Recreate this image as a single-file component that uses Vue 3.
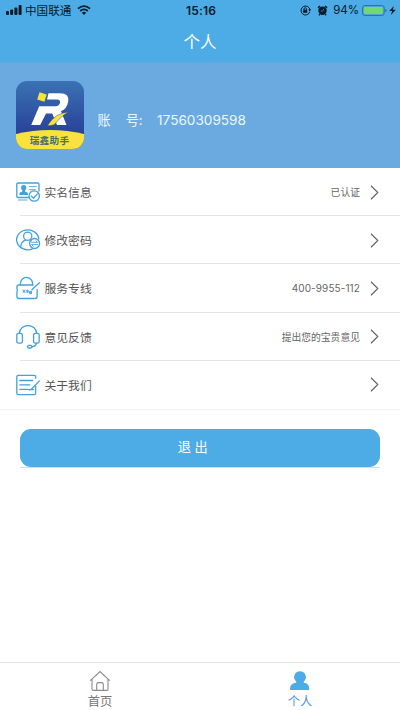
<script setup>
const rows = [
  { icon: 'identity', label: '实名信息', value: '已认证' },
  { icon: 'password', label: '修改密码', value: '' },
  { icon: 'hotline', label: '服务专线', value: '400-9955-112', numeric: true },
  { icon: 'feedback', label: '意见反馈', value: '提出您的宝贵意见' },
  { icon: 'about', label: '关于我们', value: '' },
]
</script>

<template>
  <div class="screen">
    <header class="top">
      <div class="status">
        <div class="side">
          <svg class="signal" width="16" height="10" viewBox="0 0 16 10">
            <rect x="0" y="6" width="3" height="4" rx="1" />
            <rect x="4.2" y="4.4" width="3" height="5.6" rx="1" />
            <rect x="8.4" y="2.4" width="3" height="7.6" rx="1" />
            <rect x="12.6" y="0" width="3" height="10" rx="1" />
          </svg>
          <span class="carrier">中国联通</span>
          <svg class="wifi" width="14" height="10" viewBox="0 0 14 10">
            <path d="M1 3.6Q7-1.4 13 3.6M3.2 6Q7 2.8 10.8 6" fill="none" stroke="#071b29" stroke-width="1.8" />
            <path d="M4.9 7.7Q7 6 9.1 7.7L7 9.9Z" />
          </svg>
        </div>
        <time class="clock">15:16</time>
        <div class="side right">
          <svg class="lock" width="11" height="11" viewBox="0 0 11 11">
            <path d="M9.7 7.2A4.5 4.5 0 1 1 10 5" fill="none" stroke="#071b29" />
            <path d="M8.2 4.6h2.8L9.8 6.8Z" />
            <rect x="3.2" y="4.8" width="4" height="3" />
            <path d="M4 5V3.9a1.2 1.2 0 0 1 2.4 0V5" fill="none" stroke="#071b29" stroke-width=".9" />
          </svg>
          <svg class="alarm" width="11" height="11" viewBox="0 0 11 11">
            <circle cx="5.5" cy="5.8" r="4.2" />
            <path d="M1 2.9 3 1M10 2.9 8 1M2.7 9.2 2 10.2M8.3 9.2l.7 1" fill="none" stroke="#071b29" stroke-width="1.5" />
            <path d="M7 3.8 5.5 6.1H3.8" fill="none" stroke="#4dabe6" stroke-width=".7" />
          </svg>
          <span class="percent">94%</span>
          <svg class="battery" width="25" height="11" viewBox="0 0 25 11">
            <rect x=".6" y=".6" width="21.6" height="9.8" rx="2.4" fill="none" stroke="#28709d" stroke-width="1" />
            <rect x="2" y="2" width="18.8" height="7" rx="1" fill="#72d86f" />
            <path d="M23.4 4v3q1.2-.4 1.2-1.5T23.4 4" fill="#28709d" />
          </svg>
          <svg class="bolt" width="7" height="9" viewBox="0 0 7 9">
            <path d="M4.8 0 .3 5h2.8L2 9l4.7-5.2H3.8Z" />
          </svg>
        </div>
      </div>
      <h1>个人</h1>
    </header>

    <section class="profile">
      <div class="logo">
        <svg width="68" height="68" viewBox="0 0 68 68">
          <defs>
            <linearGradient id="navy" x1="0" y1="0" x2="0" y2="1">
              <stop offset="0" stop-color="#3a72b3" />
              <stop offset=".75" stop-color="#29439a" />
            </linearGradient>
            <clipPath id="tile"><rect width="68" height="68" rx="11" /></clipPath>
          </defs>
          <g clip-path="url(#tile)">
            <rect width="68" height="68" fill="url(#navy)" />
            <path d="M0 53Q34 45 68 53V68H0Z" fill="#f9e33b" />
            <path d="M32.5 12.3H44Q53.6 12.3 52.2 20.5 51 27.7 45 30.3L50.5 44H41L36.2 32.5H30L24.2 44H15.2L23.2 25.2H39.5Q43.3 25.2 44 21.8 44.4 18.5 41 18.5H31Z" fill="#fff" />
            <path d="m23.5 11.3 7.2 2.2-2.3 7.2-7.2-2.2Z" fill="#f9e33b" />
            <path d="M31.5 44.5Q39 32 52.5 31 43.5 36 38.5 43.5q-3 1.5-7 1" fill="#f9e33b" stroke="#29479b" stroke-width=".5" />
          </g>
        </svg>
        <span>瑞鑫助手</span>
      </div>
      <p class="account"><span class="zh">账</span><span class="zh second">号:</span><span class="phone">17560309598</span></p>
    </section>

    <ul class="list">
      <li v-for="row in rows" :key="row.icon" class="row">
        <svg class="icon" width="25" height="24" viewBox="0 0 25 24">
          <g v-if="row.icon === 'identity'">
            <path d="M13 17.5H1.8Q.8 17.5.8 16.5V4Q.8 3 1.8 3h20Q23 3 23 4v7" />
            <circle class="solid" cx="7.7" cy="7.7" r="2.6" />
            <path class="solid" d="M3.4 15v-1.3q.3-1.8 2.6-2l.6-1.7h2.2l.6 1.7q2.4.2 2.6 2V15Z" />
            <path d="M13.3 6.6h7M13.3 9.7h6M2.5 20H11" class="faint" />
            <circle cx="18.2" cy="16" r="5.2" />
            <path d="m15.3 16 2.2 2.2 3.8-4.3" />
          </g>
          <g v-else-if="row.icon === 'password'">
            <path d="M16.5 20.8A11.1 9.9 0 1 1 22.8 11" />
            <circle cx="11.7" cy="8.2" r="4.1" />
            <path d="M4.8 18.5q.5-5.4 5-6.4M13.8 12l1.4.8" />
            <circle cx="18.6" cy="15.5" r="5" />
            <path d="M15.5 14.3h6l-1.6-1.5M21.6 16.6h-6l1.6 1.6" class="faint" />
          </g>
          <g v-else-if="row.icon === 'hotline'">
            <path d="M4.4 9V7.5a6.1 6.1 0 0 1 12.2 0V9" />
            <path d="M17 9H3Q.9 9 .9 11v1.7Q2 14 .9 16v4.2Q.9 22.5 3 22.5h16q2.1 0 2.1-2.3V13.5" />
            <path d="m15.8 13.8 7.6-7.1" />
            <path d="M8 14v2.6M6.9 14.6l2.2 1.4M9.1 14.6l-2.2 1.4M11.5 14v2.6M10.4 14.6l2.2 1.4M12.6 14.6l-2.2 1.4" class="faint" />
            <circle cx="14.6" cy="16.5" r="1" />
          </g>
          <g v-else-if="row.icon === 'feedback'">
            <path d="M3.3 8.3C4.2-2 19.8-2 20.7 8.3" />
            <rect x=".8" y="8.3" width="5.6" height="9.8" rx="1.7" />
            <rect x="17.6" y="8.3" width="5.6" height="9.8" rx="1.7" />
            <path d="M20.4 18.2q-.4 3.2-4.6 3.6" />
            <rect x="11.6" y="20.3" width="4.4" height="2.7" rx="1.3" />
          </g>
          <g v-else>
            <path d="M19.7 5.2V4q0-1.7-1.5-1.7h-16Q.8 2.3.8 4v16q0 1.7 1.4 1.7h16q1.5 0 1.5-1.7v-7" />
            <path d="M3.8 7.5h12.8M3.8 11.9h10M3.8 16.3h8M13.4 17l2-.8 8-8.3M17.6 16.6h-4.8" />
          </g>
        </svg>
        <span class="label">{{ row.label }}</span>
        <span class="value" :class="{ numeric: row.numeric }">{{ row.value }}</span>
        <svg class="chevron" width="9" height="15" viewBox="0 0 9 15">
          <path d="m1 .8 6.8 6.7L1 14.2" />
        </svg>
      </li>
    </ul>

    <div class="logout"><button type="button">退出</button></div>

    <nav class="tabs">
      <a class="tab">
        <svg width="22" height="22" viewBox="0 0 22 22">
          <path d="M1.3 10.7 11 1.6l9.7 9.1M3 9.1v10.2q0 1.1 1.1 1.1h13.8q1.1 0 1.1-1.1V9.1M7.7 20.4v-6q0-1.8 1.6-1.8h3.4q1.6 0 1.6 1.8v6" fill="none" stroke="#8b8b8b" stroke-width="1.1" />
        </svg>
        <span>首页</span>
      </a>
      <a class="tab active">
        <svg width="22" height="22" viewBox="0 0 22 22">
          <path d="M11 1.2a5.8 5.8 0 0 1 3.8 10.2v1.4q5.4.7 5.4 5.7V20H1v-1.5q.2-5 6.2-5.7v-1.4A5.8 5.8 0 0 1 11 1.2" fill="#4dabe6" />
        </svg>
        <span>个人</span>
      </a>
    </nav>
  </div>
</template>

<style>
body { background: #fff; }
</style>

<style scoped>
* { box-sizing: border-box; }
.screen {
  display: flex;
  flex-direction: column;
  width: 400px;
  height: 710px;
  overflow: hidden;
  background: #fff;
  font-family: "Noto Sans CJK SC", sans-serif;
  color: #555;
}
svg { display: block; flex: none; }
.top { flex: none; height: 63px; background: #4dabe6; border-bottom: 1px solid #60a9e0; }
.status {
  display: grid;
  grid-template-columns: 1fr auto 1fr;
  align-items: center;
  height: 20px;
  padding: 0 4px 0 6px;
  color: #071b29;
  fill: #071b29;
}
.side { display: flex; align-items: center; height: 20px; }
.side.right { justify-content: flex-end; }
.carrier { margin-left: 3px; font-size: 11.6px; line-height: 20px; }
.wifi { margin-left: 6px; }
.clock { padding-top: 1px; font: 600 12px/19px Inter, sans-serif; letter-spacing: .2px; }
.alarm { margin-left: 6px; }
.percent { margin-left: 5px; font: 11.5px/20px Inter, sans-serif; }
.battery { margin-left: 3px; }
.bolt { margin-left: 2px; }
h1 { margin: 9px 0 0; text-align: center; font-size: 16.5px; font-weight: 400; line-height: 24px; color: #fff; }
.profile { display: flex; flex: none; height: 105px; padding: 18px 16px 0 15.5px; background: #6baae0; }
.logo { display: grid; width: 68px; height: 68px; }
.logo > * { grid-area: 1 / 1; }
.logo span { align-self: end; justify-self: center; padding-bottom: 3px; font-size: 9.6px; font-weight: 700; line-height: 11px; letter-spacing: .3px; color: #476f72; }
.account { display: flex; align-items: center; height: 24px; margin: 27px 0 0 14px; font-size: 13.2px; line-height: 24px; color: #eaf7ff; }
.second { margin-left: 15px; }
.phone { margin-left: 14.5px; font-family: Inter, sans-serif; font-size: 13.6px; }
.list { flex: none; margin: 0; padding: 0 0 0 16px; list-style: none; border-bottom: 1px solid #f1f1f1; }
.row { display: flex; align-items: center; height: 48.2px; padding-right: 21px; background: linear-gradient(#e4e4e4, #e4e4e4) 4px 100% / 100% 1px no-repeat; }
.row:last-child { background: none; }
.icon { fill: none; stroke: #42a2dc; stroke-width: 1.3; stroke-linecap: round; stroke-linejoin: round; }
.icon .solid { fill: #42a2dc; stroke: none; }
.icon .faint { stroke-width: .9; }
.label { margin-left: 3.5px; font-size: 11.8px; line-height: 20px; }
.value { flex: 1; margin-right: 10px; text-align: right; font-size: 9.8px; line-height: 20px; color: #666; }
.value.numeric { font-family: Inter, sans-serif; font-size: 10px; letter-spacing: .1px; }
.chevron { fill: none; stroke: #666; stroke-width: 1.2; }
.logout { flex: none; margin: 19px 20px 0; border-bottom: 1px solid #bfe2f6; }
button {
  display: block;
  width: 100%;
  height: 38px;
  padding: 0 0 2px;
  border: 0;
  border-radius: 11px;
  background: #4dabe6;
  font: 13.2px/20px "Noto Sans CJK SC", sans-serif;
  letter-spacing: 3.5px;
  text-indent: -11px;
  color: #fff;
}
.tabs { display: grid; grid-template-columns: 1fr 1fr; height: 48px; margin-top: auto; border-top: 1px solid #e3e3e3; }
.tab { display: flex; flex-direction: column; align-items: center; padding-top: 7px; font-size: 12.3px; line-height: 16px; color: #777; }
.tab span { margin-top: 1px; }
.active { color: #5194d8; }
</style>
